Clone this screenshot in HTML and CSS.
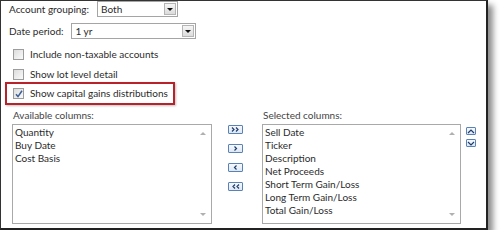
FILE: index.html
```html
<!DOCTYPE html>
<html>
<head>
<meta charset="utf-8">
<link rel="stylesheet" href="styles.css">
</head>
<body>
<div class="panel">
  <div class="field first">
    <span class="label">Account grouping:</span>
    <div class="select grouping"><span class="value">Both</span><span class="dd"><i></i></span></div>
  </div>
  <div class="field second">
    <span class="label">Date period:</span>
    <div class="select period"><span class="value">1 yr</span><span class="dd"><i></i></span></div>
  </div>
  <div class="checks">
    <div class="check"><span class="cb"></span><span>Include non-taxable accounts</span></div>
    <div class="check"><span class="cb"></span><span>Show lot level detail</span></div>
    <div class="check highlight"><span class="cb checked"><svg width="8" height="8" viewBox="0 0 8 8"><path d="M1 4.2 L3 6.6 L7 0.8" fill="none" stroke="#3b5f96" stroke-width="1.5"/></svg></span><span>Show capital gains distributions</span></div>
  </div>
  <div class="columns">
    <div class="col">
      <div class="cap">Available columns:</div>
      <div class="list left">
        <ul class="items"><li>Quantity</li><li>Buy Date</li><li>Cost Basis</li></ul>
        <div class="scroll"><i class="up"></i><i class="down"></i></div>
      </div>
    </div>
    <div class="move">
      <span class="btn"><svg width="9" height="5" viewBox="0 0 9 5"><path d="M1 0.5 L3 2.5 L1 4.5 M5 0.5 L7 2.5 L5 4.5" fill="none" stroke="#1f3d6b" stroke-width="1.2"/></svg></span>
      <span class="btn"><svg width="9" height="5" viewBox="0 0 9 5"><path d="M3.5 0.5 L5.5 2.5 L3.5 4.5" fill="none" stroke="#1f3d6b" stroke-width="1.2"/></svg></span>
      <span class="btn"><svg width="9" height="5" viewBox="0 0 9 5"><path d="M5.5 0.5 L3.5 2.5 L5.5 4.5" fill="none" stroke="#1f3d6b" stroke-width="1.2"/></svg></span>
      <span class="btn"><svg width="9" height="5" viewBox="0 0 9 5"><path d="M4 0.5 L2 2.5 L4 4.5 M8 0.5 L6 2.5 L8 4.5" fill="none" stroke="#1f3d6b" stroke-width="1.2"/></svg></span>
    </div>
    <div class="col">
      <div class="cap">Selected columns:</div>
      <div class="list right">
        <ul class="items"><li>Sell Date</li><li>Ticker</li><li>Description</li><li>Net Proceeds</li><li>Short Term Gain/Loss</li><li>Long Term Gain/Loss</li><li>Total Gain/Loss</li></ul>
        <div class="scroll"><i class="up"></i><i class="down"></i></div>
      </div>
    </div>
    <div class="order">
      <span class="obtn"><svg width="8" height="5" viewBox="0 0 8 5"><path d="M1 4 L4 1 L7 4" fill="none" stroke="#1f3d6b" stroke-width="1.2"/></svg></span>
      <span class="obtn"><svg width="8" height="5" viewBox="0 0 8 5"><path d="M1 1 L4 4 L7 1" fill="none" stroke="#1f3d6b" stroke-width="1.2"/></svg></span>
    </div>
  </div>
</div>
</body>
</html>
```
FILE: styles.css
```css
html, body {
  margin: 0;
  padding: 0;
  background: #fff;
}
body {
  font-family: Lato, "Open Sans", sans-serif;
  font-size: 10px;
  line-height: 13px;
  color: #2b2b2b;
}
.panel {
  width: 485px;
  height: 227px;
  border-top: 1px solid #333;
  border-left: 1px solid #333;
  border-right: 2px solid #222;
  border-bottom: 2px solid #222;
  box-shadow: 5px 5px 6px rgba(0, 0, 0, 0.45);
  background: #fff;
}
.field {
  display: flex;
  align-items: center;
  gap: 8px;
  padding-left: 8px;
  height: 16px;
}
.field.second {
  margin-top: 6px;
}
.select {
  box-sizing: border-box;
  height: 16px;
  border: 1px solid #a5a5a5;
  display: flex;
  align-items: center;
  justify-content: space-between;
  padding-left: 3px;
  padding-right: 1px;
}
.select.grouping { width: 81px; }
.select.period { width: 125px; }
.dd {
  box-sizing: border-box;
  width: 12px;
  height: 12px;
  border: 1px solid #b5b5b5;
  background: linear-gradient(#f6f6f6, #dcdcdc);
  display: flex;
  align-items: center;
  justify-content: center;
}
.dd i {
  width: 0;
  height: 0;
  border-left: 3px solid transparent;
  border-right: 3px solid transparent;
  border-top: 3px solid #111;
}
.checks {
  margin-top: 5px;
}
.check {
  display: flex;
  align-items: center;
  gap: 6px;
  height: 20px;
  padding-left: 12px;
}
.check.highlight {
  display: inline-flex;
  box-sizing: border-box;
  height: 23px;
  margin-top: -2px;
  margin-left: 4px;
  padding-left: 6px;
  padding-right: 5px;
  border: 2px solid #b8232b;
  box-shadow: 1px 1px 2px rgba(0, 0, 0, 0.25);
}
.cb {
  box-sizing: border-box;
  width: 11px;
  height: 11px;
  border: 1px solid #9c9c9c;
  background: linear-gradient(135deg, #dcdcdc, #fafafa);
  display: flex;
  align-items: center;
  justify-content: center;
}
.columns {
  display: flex;
  padding-left: 11px;
  margin-top: 2px;
}
.cap {
  height: 17px;
  line-height: 17px;
  padding-left: 1px;
  color: #444;
}
.list {
  box-sizing: border-box;
  height: 100px;
  border: 1px solid #a9a9a9;
  display: flex;
  justify-content: space-between;
}
.list.left { width: 200px; }
.list.right { width: 199px; }
.items {
  list-style: none;
  margin: 0;
  padding: 1px 0 0 2px;
}
.items li {
  height: 13px;
  line-height: 13px;
}
.scroll {
  width: 17px;
  display: flex;
  flex-direction: column;
  justify-content: space-between;
  align-items: center;
  padding: 7px 0 7px;
}
.scroll i {
  width: 0;
  height: 0;
  border-left: 3px solid transparent;
  border-right: 3px solid transparent;
}
.scroll .up { border-bottom: 3px solid #b0b0b0; }
.scroll .down { border-top: 3px solid #b0b0b0; }
.move {
  display: flex;
  flex-direction: column;
  gap: 10px;
  margin-left: 16px;
  margin-right: 19px;
  padding-top: 18px;
}
.btn, .obtn {
  box-sizing: border-box;
  border: 1px solid #5b82b5;
  border-radius: 1px;
  background: linear-gradient(#f6f9fd, #dde8f5);
  display: flex;
  align-items: center;
  justify-content: center;
}
.btn {
  width: 15px;
  height: 9px;
}
.order {
  display: flex;
  flex-direction: column;
  gap: 4px;
  margin-left: 5px;
  padding-top: 20px;
}
.obtn {
  width: 10px;
  height: 8px;
}
```
